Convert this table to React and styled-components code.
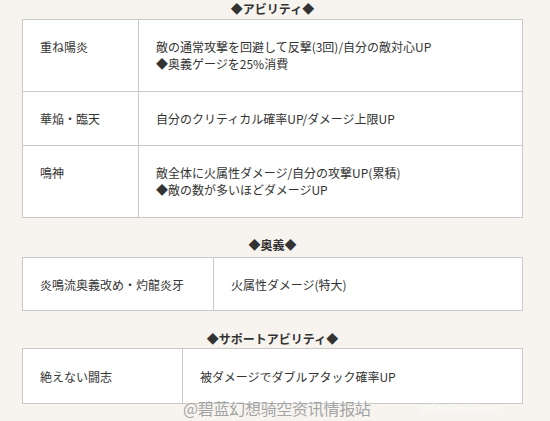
import React from 'react';
import styled, { createGlobalStyle } from 'styled-components';

const GlobalStyle = createGlobalStyle`
  html, body {
    margin: 0;
    padding: 0;
    background: #f7f4ef;
  }
  body {
    font-family: "Noto Sans CJK JP", "Noto Sans CJK SC", sans-serif;
    font-size: 12px;
    color: #333;
  }
`;

const abilities = [
  { name: '重ね陽炎', desc: ['敵の通常攻撃を回避して反撃(3回)/自分の敵対心UP', '◆奥義ゲージを25%消費'] },
  { name: '華焔・臨天', desc: ['自分のクリティカル確率UP/ダメージ上限UP'] },
  { name: '鳴神', desc: ['敵全体に火属性ダメージ/自分の攻撃UP(累積)', '◆敵の数が多いほどダメージUP'] },
];

const ougi = [{ name: '炎鳴流奥義改め・灼龍炎牙', desc: ['火属性ダメージ(特大)'] }];
const support = [{ name: '絶えない闘志', desc: ['被ダメージでダブルアタック確率UP'] }];

const Page = styled.div`
  position: relative;
  width: 550px;
  height: 421px;
  overflow: hidden;
  padding: 2px 27px 0 22px;
  box-sizing: border-box;
`;

const Heading = styled.div`
  text-align: center;
  font-weight: bold;
  font-size: 12px;
  line-height: 14px;
  margin-top: ${(p) => p.$top}px;
  margin-bottom: ${(p) => p.$bottom}px;
`;

const Table = styled.table`
  width: 501px;
  border-collapse: collapse;
  background: #fff;
  table-layout: fixed;
  border: 1px solid #c4c4c4;
`;

const Cell = styled.td`
  border: 1px solid #c9c9c9;
  padding: 0 17px;
  height: ${(p) => p.$h}px;
  vertical-align: ${(p) => (p.$multi ? 'top' : 'middle')};
  padding-top: ${(p) => (p.$multi ? '18px' : '0')};
  line-height: 17px;
  width: ${(p) => (p.$w ? `${p.$w}px` : 'auto')};
  box-sizing: border-box;
`;

const Watermark = styled.div`
  position: absolute;
  left: 183px;
  top: 398px;
  font-size: 16px;
  line-height: 20px;
  color: #a3a3a3;
  letter-spacing: -0.3px;
  text-shadow: 0 0 1px #fff;
`;

const FaintMark = styled.div`
  position: absolute;
  left: 420px;
  top: 400px;
  font-size: 10px;
  color: rgba(255, 255, 255, 0.7);
`;

const AbilityTable = ({ rows, first, heights }) => (
  <Table>
    <tbody>
      {rows.map((r, i) => {
        const multi = r.desc.length > 1;
        return (
          <tr key={i}>
            <Cell $w={first} $h={heights[i]} $multi={multi}>{r.name}</Cell>
            <Cell $h={heights[i]} $multi={multi}>
              {r.desc.map((line, j) => (
                <div key={j}>{line}</div>
              ))}
            </Cell>
          </tr>
        );
      })}
    </tbody>
  </Table>
);

export default function App() {
  return (
    <Page>
      <GlobalStyle />
      <Heading $top={0} $bottom={3}>◆アビリティ◆</Heading>
      <AbilityTable rows={abilities} first={116} heights={[72, 54, 72]} />
      <Heading $top={20} $bottom={5}>◆奥義◆</Heading>
      <AbilityTable rows={ougi} first={191} heights={[53]} />
      <Heading $top={21} $bottom={2}>◆サポートアビリティ◆</Heading>
      <AbilityTable rows={support} first={160} heights={[55]} />
      <Watermark>@碧蓝幻想骑空资讯情报站</Watermark>
      <FaintMark>gbf.huijiwiki.com</FaintMark>
    </Page>
  );
}
